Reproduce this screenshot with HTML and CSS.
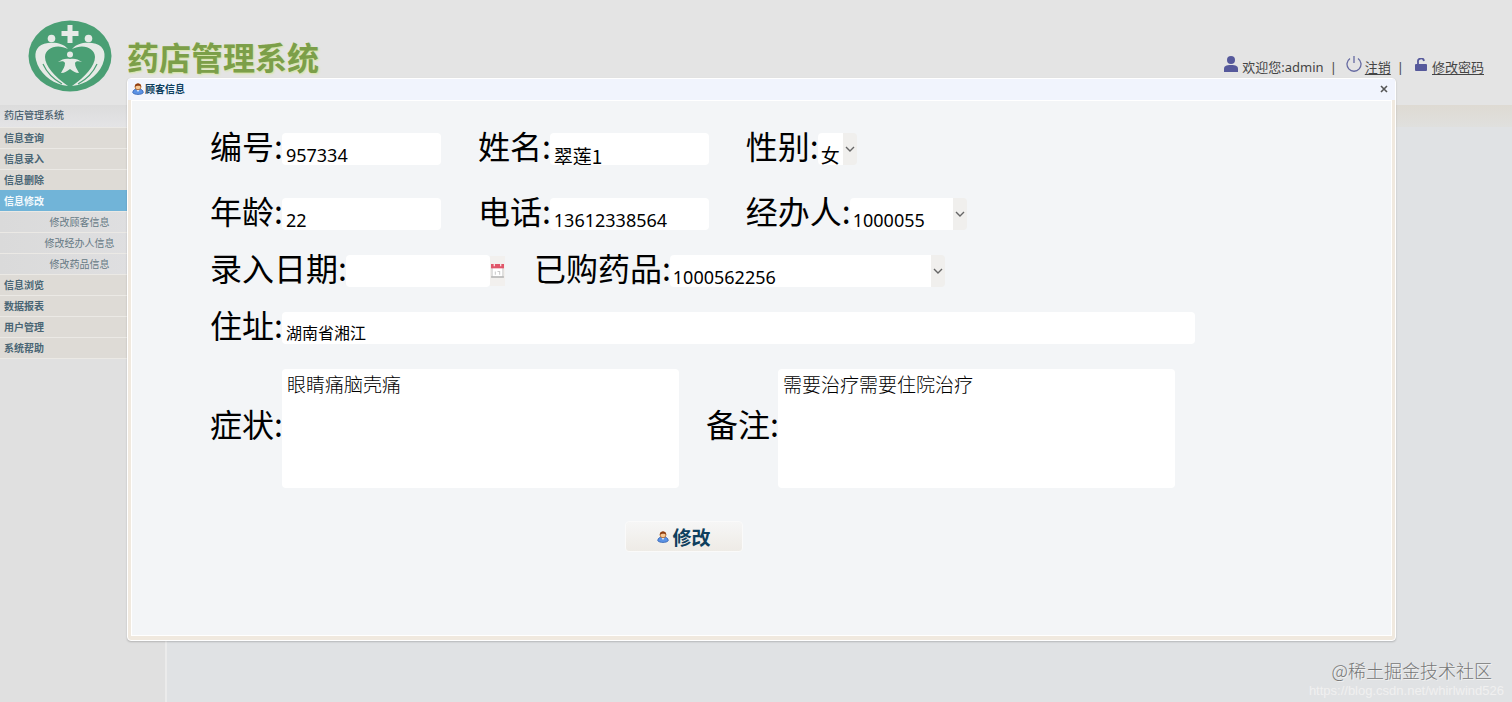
FILE: index.html
```html
<!DOCTYPE html>
<html lang="zh-CN">
<head>
    <meta charset="UTF-8">
    <meta name="viewport" content="width=device-width, initial-scale=1.0">
    <title>药店管理系统</title>
    <link rel="stylesheet" href="styles.css">
</head>
<body>
    <!-- shared icons -->
    <svg class="defs" width="0" height="0">
        <symbol id="icon-customer" viewBox="0 0 16 16">
            <path d="M1 13c0-4 3-5 7-5s7 1 7 5c-2 3-12 3-14 0z" fill="#5b92e5" stroke="#2c5cae"/>
            <path d="M6 9l2 3 2-3z" fill="#e8f0fb"/>
            <circle cx="8" cy="5" r="4" fill="#f9c995" stroke="#a85a1c"/>
            <path d="M4 5c-1-6 9-6 8 0-1-2-6-2-8 0z" fill="#8f3d10"/>
        </symbol>
        <symbol id="icon-down" viewBox="0 0 10 6">
            <path d="M1 1l4 4 4-4" fill="none" stroke="#666" stroke-width="1.4"/>
        </symbol>
    </svg>

    <header class="header">
        <svg class="logo" viewBox="0 0 84 72">
            <ellipse cx="42" cy="36" rx="41.500" ry="35.500" fill="#4a9f74"/>
            <g fill="#e6eae6">
                <path d="M39.500 5h5v6h6v5h-6v7h-5v-7h-6v-5h6z"/>
                <circle cx="23.500" cy="18.500" r="3.800"/>
                <circle cx="60.500" cy="18.500" r="3.800"/>
                <path d="M40 29C35 23 27 22 20 23C9 24 6 32 8 40C11 53 23 62 34 65L40 66C27 57 17 46 17 37C17 28 29 23 40 29z"/>
                <path d="M44 29C49 23 57 22 64 23C75 24 78 32 76 40C73 53 61 62 50 65L44 66C57 57 67 46 67 37C67 28 55 23 44 29z"/>
                <circle cx="42" cy="34.500" r="3"/>
                <path d="M30 42c4-3 8-4 12-3 4-1 8 0 12 3-4-1-6-1-7 1 0 4 2 6 4 10-4 0-6-2-9-4-3 2-5 4-9 4 2-4 4-6 4-10-1-2-3-2-7-1z"/>
            </g>
            <g fill="none" stroke="#4a9f74" stroke-width="1.200">
                <path d="M15 44c4 9 10 15 19 20M69 44c-4 9-10 15-19 20"/>
            </g>
        </svg>
        <h1 class="brand">药店管理系统</h1>
        <div class="user-bar">
            <svg class="user-icon" viewBox="0 0 14 16">
                <circle cx="7" cy="4" r="4" fill="#56599b"/>
                <path d="M0 16v-3c0-3 2-4 7-4s7 1 7 4v3z" fill="#56599b"/>
            </svg>
            <span>欢迎您:admin</span>
            <span class="split">|</span>
            <svg class="power-icon" viewBox="0 0 16 16">
                <path d="M4 2.500a7 7 0 1 0 8 0M8 0v7" fill="none" stroke="#666aa2" stroke-width="1.300"/>
            </svg>
            <a href="#">注销</a>
            <span class="split">|</span>
            <svg class="lock-icon" viewBox="0 0 12 13">
                <path d="M3 7V4a3 3 0 0 1 6-1" fill="none" stroke="#56599b" stroke-width="1.800"/>
                <rect y="6" width="12" height="7" rx="1" fill="#56599b"/>
            </svg>
            <a href="#">修改密码</a>
        </div>
    </header>

    <div class="layout">
        <nav class="sidebar">
            <h2 class="nav-title">药店管理系统</h2>
            <a class="nav-item" href="#">信息查询</a>
            <a class="nav-item" href="#">信息录入</a>
            <a class="nav-item" href="#">信息删除</a>
            <a class="nav-item active" href="#">信息修改</a>
            <a class="nav-sub" href="#">修改顾客信息</a>
            <a class="nav-sub" href="#">修改经办人信息</a>
            <a class="nav-sub" href="#">修改药品信息</a>
            <a class="nav-item" href="#">信息浏览</a>
            <a class="nav-item" href="#">数据报表</a>
            <a class="nav-item" href="#">用户管理</a>
            <a class="nav-item" href="#">系统帮助</a>
        </nav>
        <main class="content">
            <div class="tab-bar"></div>
        </main>
    </div>

    <!-- customer window -->
    <section class="dialog">
        <div class="dialog-head">
            <svg class="head-icon"><use href="#icon-customer"/></svg>
            <h2>顾客信息</h2>
            <button class="close" type="button" aria-label="关闭">
                <svg viewBox="0 0 8 8"><path d="M1 1l6 6M7 1L1 7" stroke="#555" stroke-width="1.600"/></svg>
            </button>
        </div>
        <form class="dialog-body">
            <div class="row row-tall">
                <div class="field">
                    <label for="no">编号:</label>
                    <input id="no" type="text" value="957334">
                </div>
                <div class="field">
                    <label for="name">姓名:</label>
                    <input id="name" class="cjk" type="text" value="翠莲1">
                </div>
                <div class="field">
                    <label for="sex">性别:</label>
                    <div class="select sex">
                        <select id="sex" class="cjk"><option>女</option><option>男</option></select>
                        <svg><use href="#icon-down"/></svg>
                    </div>
                </div>
            </div>
            <div class="row">
                <div class="field">
                    <label for="age">年龄:</label>
                    <input id="age" type="text" value="22">
                </div>
                <div class="field">
                    <label for="phone">电话:</label>
                    <input id="phone" type="text" value="13612338564">
                </div>
                <div class="field">
                    <label for="agent">经办人:</label>
                    <div class="select agent">
                        <select id="agent"><option>1000055</option></select>
                        <svg><use href="#icon-down"/></svg>
                    </div>
                </div>
            </div>
            <div class="row row-close">
                <div class="field">
                    <label for="date">录入日期:</label>
                    <input id="date" class="date" type="text">
                    <button class="date-btn" type="button" aria-label="选择日期">
                        <svg viewBox="0 0 12 13">
                            <rect x="1" y="1" width="10" height="11" fill="#fff" stroke="#ccc"/>
                            <path d="M0 0h12v4H0z" fill="#e0566a"/>
                            <path d="M3 0v2M9 0v2" stroke="#fff"/>
                            <path d="M4 7v3M6 7h2v3" fill="none" stroke="#ccc"/>
                            <path d="M0 12h12" stroke="#aaa"/>
                        </svg>
                    </button>
                </div>
                <div class="field">
                    <label for="drug">已购药品:</label>
                    <div class="select drug">
                        <select id="drug"><option>1000562256</option></select>
                        <svg><use href="#icon-down"/></svg>
                    </div>
                </div>
            </div>
            <div class="row row-close">
                <div class="field grow">
                    <label for="address">住址:</label>
                    <input id="address" class="address" type="text" value="湖南省湘江">
                </div>
            </div>
            <div class="row row-area">
                <div class="field grow">
                    <label for="symptom">症状:</label>
                    <textarea id="symptom">眼睛痛脑壳痛</textarea>
                </div>
                <div class="field grow">
                    <label for="remark">备注:</label>
                    <textarea id="remark">需要治疗需要住院治疗</textarea>
                </div>
            </div>
            <div class="actions">
                <button class="submit" type="button"><svg><use href="#icon-customer"/></svg>修改</button>
            </div>
        </form>
    </section>

    <div class="watermark">
        <p>@稀土掘金技术社区</p>
        <small>https://blog.csdn.net/whirlwind526</small>
    </div>
</body>
</html>
```

FILE: styles.css
```css
* {
    box-sizing: border-box;
}

body {
    display: flex;
    flex-direction: column;
    position: relative;
    margin: 0;
    min-height: 100vh;
    background: #e1e1e1;
    color: #444;
    font-family: "Noto Sans", "Noto Sans CJK SC", sans-serif;
    font-size: 13px;
}

.defs {
    position: absolute;
}

h1, h2, p {
    margin: 0;
}

/* header */
.header {
    display: flex;
    align-items: flex-start;
    height: 105px;
    padding: 20px 28px 0;
    background: #e4e4e4;
}

.logo {
    width: 84px;
    height: 72px;
}

.brand {
    margin: 14px 0 0 15px;
    color: #7c9f49;
    font-family: "Noto Sans CJK SC", sans-serif;
    font-size: 32px;
    line-height: 44px;
    text-shadow: 1px 1px 2px #d4e59c;
}

.user-bar {
    display: flex;
    align-items: center;
    margin: 36px 0 0 auto;
    line-height: 22px;
}

.user-bar a {
    color: #444;
    text-underline-offset: 2px;
}

.user-bar svg {
    margin-bottom: 6px;
}

.split {
    margin: 0 6px;
}

.user-icon {
    width: 14px;
    height: 16px;
    margin-right: 4px;
}

.power-icon {
    width: 16px;
    height: 16px;
    margin: 0 3px;
}

.lock-icon {
    width: 12px;
    height: 13px;
    margin: 0 5px;
}

/* sidebar */
.layout {
    display: flex;
    flex: 1;
}

.sidebar {
    width: 167px;
    padding-right: 2px;
    border-right: 2px solid #ebebeb;
    background: #e0e0e0;
    font-family: "Noto Sans CJK SC", sans-serif;
}

.nav-title {
    height: 22px;
    padding-left: 4px;
    background: linear-gradient(#dcdcdc, #e4e4e6);
    color: #4c6270;
    font-size: 10px;
    font-weight: 500;
    line-height: 20px;
}

.nav-item,
.nav-sub {
    display: block;
    height: 21px;
    border-top: 1px solid #ebe9e5;
    font-size: 10px;
    line-height: 20px;
    text-decoration: none;
}

.nav-item {
    padding-left: 4px;
    background: #dedbd6;
    color: #496574;
    font-weight: 600;
}

.nav-item:last-child {
    height: 22px;
    border-bottom: 1px solid #ebe9e5;
}

.nav-item.active {
    background: #71b4d8;
    border-color: #71b4d8;
    color: #f4fafd;
}

.nav-sub {
    padding-right: 4px;
    background: linear-gradient(90deg, #dadada, #e0e0e2);
    color: #657984;
    text-align: center;
}

.content {
    flex: 1;
    background: #e0e2e4;
}

.tab-bar {
    height: 22px;
    background: linear-gradient(#dedad3, #e0e0de);
}

/* dialog */
.dialog {
    position: absolute;
    top: 78px;
    left: 127px;
    right: 116px;
    display: flex;
    flex-direction: column;
    min-height: 563px;
    padding: 0 3px 4px;
    border: 1px solid #fff;
    border-radius: 4px;
    background: #f0e9df;
    box-shadow: 0 1px 2px rgba(0, 0, 0, 0.2);
    color: #000;
}

.dialog-head {
    display: flex;
    align-items: center;
    height: 21px;
    margin: 0 -3px;
    padding: 0 7px 0 4px;
    background: #f1f4fd;
    font-family: "Noto Sans CJK SC", sans-serif;
}

.dialog-head h2 {
    color: #0e3f5e;
    font-size: 10px;
    line-height: 18px;
    padding-bottom: 2px;
}

.head-icon {
    width: 12px;
    height: 12px;
    margin: 0 1px 2px 0;
}

.close {
    width: 8px;
    height: 8px;
    margin: 0 0 2px auto;
    padding: 0;
    border: 0;
    background: none;
}

.close svg {
    display: block;
}

.dialog-body {
    flex: 1;
    padding: 32px 80px 24px 78px;
    border: 1px solid #fff;
    background: #f3f5f7;
}

.row {
    display: flex;
    gap: 37px;
    max-width: 985px;
    margin-bottom: 25px;
}

.row-tall {
    margin-bottom: 33px;
}

.row-close {
    gap: 29px;
}

.row-area {
    gap: 27px;
    max-width: 965px;
    margin-bottom: 33px;
}

.field {
    display: flex;
    align-items: center;
}

.grow {
    flex: 1;
}

label {
    flex: none;
    margin-right: -1px;
    padding-bottom: 8px;
    font-family: "Noto Sans CJK SC", sans-serif;
    font-size: 32px;
    line-height: 24px;
    white-space: nowrap;
}

.row-area label {
    padding-bottom: 12px;
}

input,
select,
textarea {
    border: 0;
    border-radius: 4px;
    outline: 0;
    background: #fff;
    color: #000;
    font-family: "Noto Sans", "Noto Sans CJK SC", sans-serif;
    font-size: 18px;
}

input {
    width: 159px;
    height: 32px;
    padding: 12px 4px 0;
}

.cjk {
    font-family: "Noto Sans CJK SC", sans-serif;
    font-size: 19px;
}

input.date {
    width: 144px;
}

input.address {
    width: 100%;
    padding-top: 8px;
    font-size: 16px;
}

.date-btn {
    width: 15px;
    height: 30px;
    padding: 0 1px;
    border: 0;
    background: #f2f0ee;
}

.date-btn svg {
    display: block;
}

.select {
    display: flex;
    position: relative;
}

.select select {
    appearance: none;
    width: 100%;
    height: 32px;
    padding: 12px 16px 0 3px;
    background: linear-gradient(#f0efed, #f0efed) right / 14px 100% no-repeat #fff;
    line-height: 20px;
}

.select svg {
    position: absolute;
    top: 13px;
    right: 2px;
    width: 10px;
    height: 6px;
    pointer-events: none;
}

.sex {
    width: 39px;
}

.select.sex select {
    padding-right: 0;
}

.agent {
    width: 117px;
}

.drug {
    width: 275px;
}

textarea {
    width: 100%;
    height: 119px;
    padding: 2px 5px;
    font-family: "Noto Sans CJK SC", sans-serif;
    font-size: 19px;
    font-weight: 300;
    line-height: 26px;
    resize: none;
}

.actions {
    padding-left: 415px;
}

.submit {
    display: flex;
    align-items: center;
    justify-content: center;
    width: 118px;
    height: 31px;
    padding: 0;
    border: 1px solid #fafafa;
    border-radius: 4px;
    background: linear-gradient(#f6f6f6, #eeebe6);
    color: #0e3f5e;
    font-family: "Noto Sans CJK SC", sans-serif;
    font-size: 19px;
    font-weight: 700;
}

.submit svg {
    width: 12px;
    height: 12px;
    margin-right: 3px;
}

/* watermark */
.watermark {
    position: absolute;
    right: 8px;
    bottom: 4px;
    font-family: "Noto Sans CJK SC", sans-serif;
    text-align: right;
}

.watermark p {
    padding-right: 12px;
    color: #777;
    font-size: 18px;
    font-weight: 300;
    line-height: 26px;
    text-shadow: 1px 1px 0 #f2f2f2;
}

.watermark small {
    display: block;
    color: #f0f0f0;
    font-family: "Liberation Sans", sans-serif;
    font-size: 13px;
    line-height: 15px;
}
```
